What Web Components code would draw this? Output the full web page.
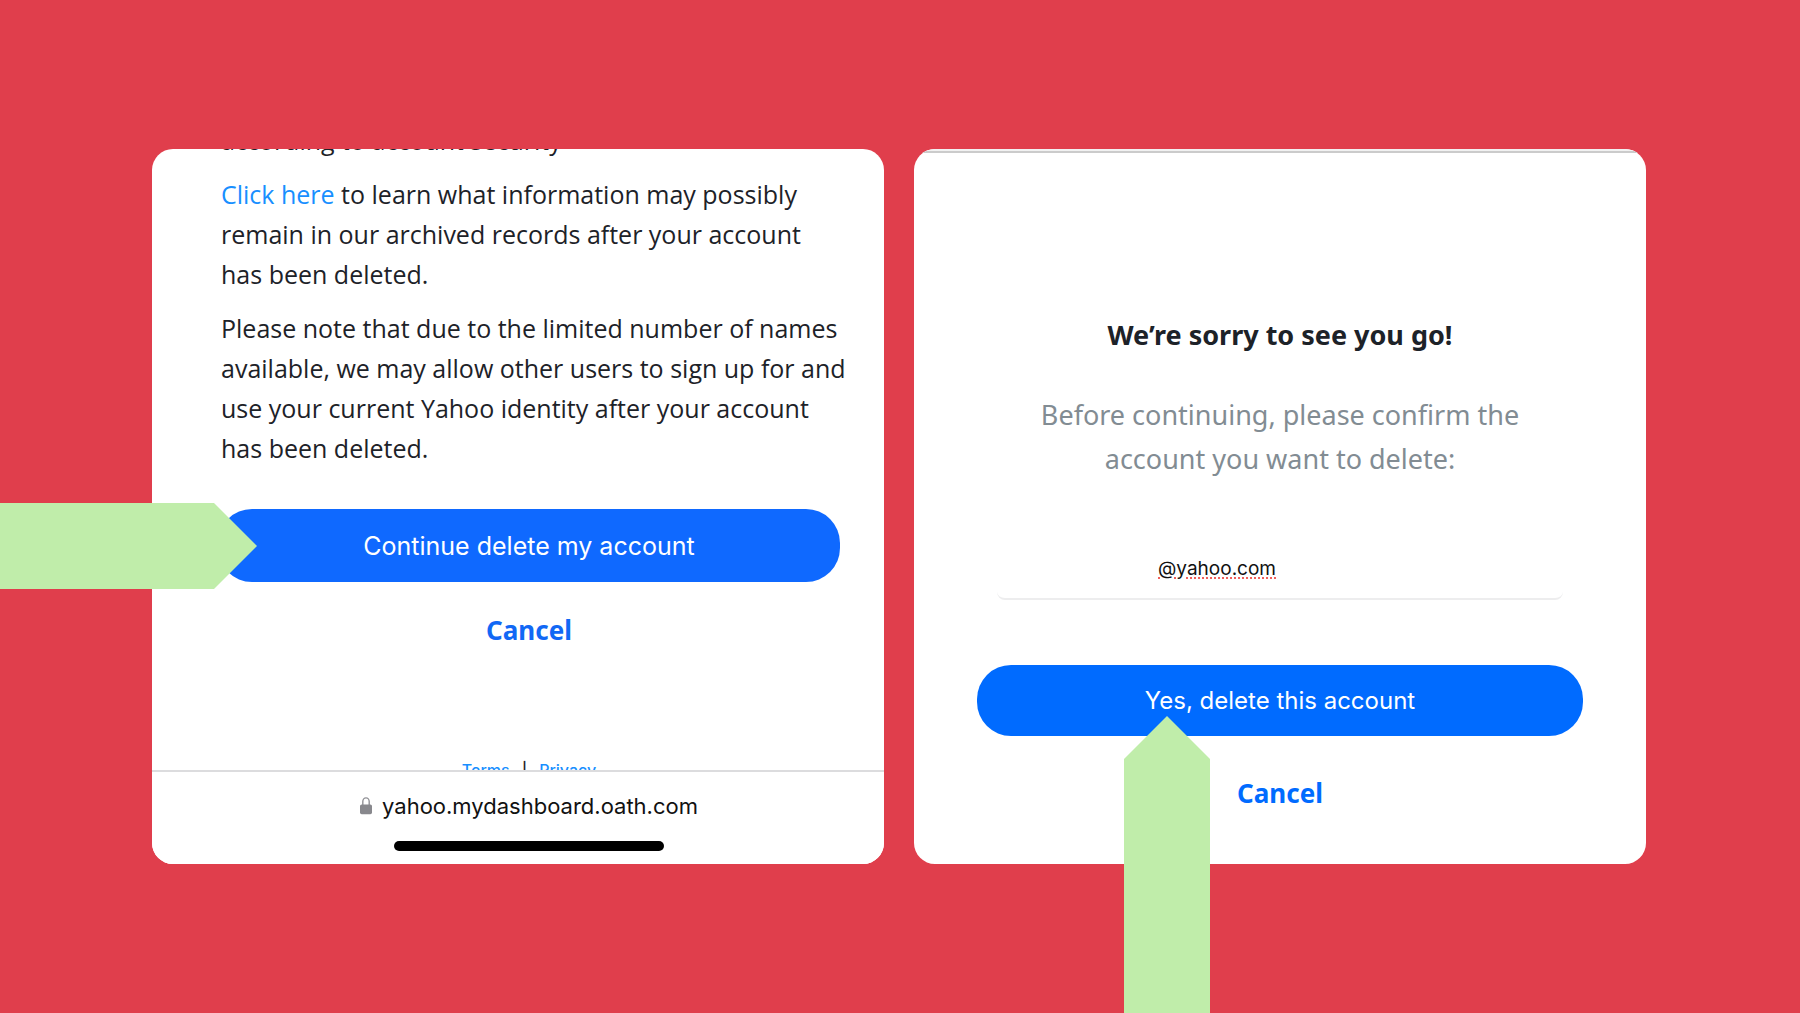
<!DOCTYPE html>
<html lang="en">
<head>
<meta charset="utf-8">
<title>Delete your Yahoo account</title>
<style>
  body { margin: 0; font-family: "Noto Sans", "Open Sans", sans-serif; color: #1d2228; }
</style>
</head>
<body>
<step-stage>
  <notice-screen></notice-screen>
  <confirm-screen></confirm-screen>
</step-stage>

<script>
const define = (name, html) => customElements.define(name, class extends HTMLElement {
  constructor() {
    super();
    const t = document.createElement('template');
    t.innerHTML = html;
    this.attachShadow({ mode: 'open' }).append(t.content.cloneNode(true));
  }
});

/* Green pointer: direction="right" or "up" */
define('step-arrow', `
<style>
  :host { display: block; position: absolute; background: #c0edaa; }
  :host([direction="right"]) { clip-path: polygon(0 0, calc(100% - 43px) 0, 100% 50%, calc(100% - 43px) 100%, 0 100%); }
  :host([direction="up"]) { clip-path: polygon(50% 0, 100% 43px, 100% 100%, 0 100%, 0 43px); }
</style>`);

define('pill-button', `
<style>
  :host { display: block; }
  button {
    display: block; width: 100%; height: var(--pill-height, 72px); padding: 0; border: 0;
    border-radius: 34px; background: var(--pill-color, #0f69ff); color: #fff;
    font: var(--pill-size, 24px) Inter, "Liberation Sans", sans-serif;
  }
</style>
<button type="button"><slot></slot></button>`);

define('cancel-link', `
<style>
  :host { display: block; text-align: center; font-size: 26px; line-height: 40px; font-weight: 700; }
  a { color: var(--link-color, #0f69ff); text-decoration: none; }
</style>
<a href="#"><slot></slot></a>`);

define('address-bar', `
<style>
  :host { display: block; border-top: 2px solid #dcdcde; padding: 20px 44px 13px 66px; color: #111; background: #fff; }
  .url { display: flex; justify-content: center; align-items: center; gap: 10px; font: 22px/28px Inter, "Liberation Sans", sans-serif; }
  svg { display: block; width: 12px; height: 18px; }
  .home { width: 270px; height: 10px; margin: 21px auto 0; border-radius: 5px; background: #000; }
</style>
<div class="url">
  <svg viewBox="0 0 12 18" aria-hidden="true">
    <path d="M2.8 8V4.6a3.2 3.7 0 0 1 6.4 0V8" fill="none" stroke="#929297" stroke-width="1.4"/>
    <rect x="0" y="7.4" width="12" height="9.8" rx="1.7" fill="#88888d"/>
  </svg>
  <span><slot></slot></span>
</div>
<div class="home"></div>`);

define('notice-screen', `
<style>
  :host { display: block; background: #fff; border-radius: 21px; overflow: hidden; }
  .view { height: 621px; overflow: hidden; padding: 0 44px 0 66px; }
  .scrolled { margin-top: -29px; }
  p { margin: 0 0 14px 3px; font: 25px/40px "Open Sans", "Noto Sans", sans-serif; white-space: nowrap; }
  a { color: #188fff; text-decoration: none; }
  pill-button { margin-top: 41px; --pill-height: 73px; --pill-size: 25px; }
  cancel-link { margin-top: 28px; --link-color: #1168f5; }
  footer { display: flex; justify-content: center; gap: 12px; margin-top: 110px; font: 500 16px/20px Inter, "Liberation Sans", sans-serif; }
</style>
<div class="view">
  <div class="scrolled">
    <p>according to account security</p>
    <p><a href="#">Click here</a> to learn what information may possibly<br>remain in our archived records after your account<br>has been deleted.</p>
    <p>Please note that due to the limited number of names<br>available, we may allow other users to sign up for and<br>use your current Yahoo identity after your account<br>has been deleted.</p>
    <pill-button>Continue delete my account</pill-button>
    <cancel-link>Cancel</cancel-link>
    <footer><a href="#">Terms</a><span>|</span><a href="#">Privacy</a></footer>
  </div>
</div>
<address-bar>yahoo.mydashboard.oath.com</address-bar>`);

define('confirm-screen', `
<style>
  :host { display: block; background: #fff; border-radius: 21px; overflow: hidden; text-align: center; }
  .edge { height: 2px; background: #f1f1f1; border-bottom: 2px solid #cbcbcb; }
  .body { padding: 164px 63px 0; }
  h1 { margin: 0; font-size: 27px; line-height: 36px; font-weight: 700; }
  label { display: block; margin-top: 40px; font-size: 27px; line-height: 44px; color: #828c93; }
  .field { display: flex; margin: 69px 20px 65px; }
  input {
    flex: 1; min-width: 0; box-sizing: border-box; height: 50px; padding: 0 0 12px 161px;
    border: 0; border-bottom: 2px solid #ededee; border-radius: 8px; background: #fff; color: #111;
    font: 19px Inter, "Liberation Sans", sans-serif;
    text-decoration: underline dotted #f0605c 2px; text-underline-offset: 3px;
  }
  pill-button { --pill-height: 71px; --pill-color: #006bff; --pill-size: 24px; }
  cancel-link { margin-top: 37px; --link-color: #006bff; }
</style>
<div class="edge"></div>
<div class="body">
  <h1>We’re sorry to see you go!</h1>
  <label for="account">Before continuing, please confirm the<br>account you want to delete:</label>
  <div class="field"><input id="account" type="text" value="@yahoo.com" spellcheck="false"></div>
  <pill-button>Yes, delete this account</pill-button>
  <cancel-link>Cancel</cancel-link>
</div>`);

define('step-stage', `
<style>
  :host {
    display: flex; align-items: center; position: relative; box-sizing: border-box;
    min-height: 100vh; padding: 0 154px 0 152px; background: #e03e4c; overflow: hidden;
  }
  .cards { flex: 1; display: grid; grid-template-columns: 1fr 1fr; gap: 30px; }
  .first { left: 0; top: 503px; width: 257px; height: 86px; }
  .second { left: 1124px; top: 716px; bottom: 0; width: 86px; }
</style>
<div class="cards"><slot></slot></div>
<step-arrow class="first" direction="right"></step-arrow>
<step-arrow class="second" direction="up"></step-arrow>`);
</script>
</body>
</html>
